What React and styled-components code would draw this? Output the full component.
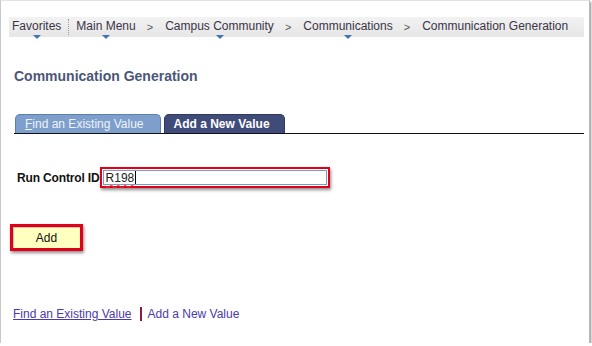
import React from "react";
import styled, { createGlobalStyle } from "styled-components";

const GlobalStyle = createGlobalStyle`
  html, body {
    margin: 0;
    padding: 0;
    background: #ffffff;
  }
  body {
    font-family: "Liberation Sans", Arial, sans-serif;
    font-size: 12px;
  }
`;

const Frame = styled.div`
  box-sizing: border-box;
  width: 590px;
  height: 343px;
  border-top: 1px solid #e4e4e4;
  border-left: 1px solid #c8c8c8;
  border-right: 1px solid #b8b8b8;
  box-shadow: 1px 2px 2px rgba(0, 0, 0, 0.45);
  background: #fff;
  display: flex;
  flex-direction: column;
`;

const Breadcrumbs = styled.nav`
  margin: 16px 5px 0 8px;
  height: 20px;
  display: flex;
  align-items: center;
  background: linear-gradient(#f2f2f2, #e6e6e6);
  padding-left: 3px;
  color: #3a3448;
  font-size: 12px;
`;

const Crumb = styled.span`
  position: relative;
  white-space: nowrap;
  padding-bottom: 2px;
`;

const Caret = styled.span`
  position: absolute;
  left: 50%;
  bottom: -4px;
  margin-left: -4px;
  width: 0;
  height: 0;
  border-left: 4px solid transparent;
  border-right: 4px solid transparent;
  border-top: 4px solid #3f74b8;
`;

const DotSep = styled.span`
  width: 0;
  height: 16px;
  border-left: 1px dotted #9a9a9a;
  margin: 0 7px 0 7px;
`;

const Arrow = styled.span`
  color: #555;
  margin: 0 12px 0 11px;
  font-size: 11px;
`;

const Title = styled.h1`
  margin: 31px 0 0 13px;
  font-size: 14px;
  font-weight: bold;
  color: #4b5776;
`;

const TabRow = styled.div`
  margin: 30px 5px 0 13px;
  display: flex;
  align-items: flex-end;
  gap: 3px;
  padding-left: 1px;
  border-bottom: 1px solid #111;
`;

const Tab = styled.div`
  height: 18px;
  padding: 0 ${(p) => (p.$active ? "14px" : "16px")} 0 9px;
  display: flex;
  align-items: center;
  border: 1px solid ${(p) => (p.$active ? "#2f3a5c" : "#5c7fae")};
  border-bottom: none;
  border-radius: 5px 5px 0 0;
  background: ${(p) => (p.$active ? "#3f4c7a" : "#7e9fcc")};
  color: ${(p) => (p.$active ? "#ffffff" : "#eef3fa")};
  font-weight: ${(p) => (p.$active ? "bold" : "normal")};
  font-size: 12px;
`;

const FieldRow = styled.div`
  margin: 33px 0 0 16px;
  display: flex;
  align-items: center;
`;

const Label = styled.label`
  font-weight: bold;
  font-size: 12px;
  color: #111;
  margin-right: 0;
  letter-spacing: -0.15px;
`;

const InputBox = styled.div`
  box-sizing: border-box;
  width: 230px;
  height: 21px;
  border: 2px solid #e0001a;
  box-shadow: 1px 2px 3px rgba(0, 0, 0, 0.45);
  display: flex;
  align-items: center;
  padding: 1px;
`;

const InputInner = styled.div`
  box-sizing: border-box;
  flex: 1;
  height: 100%;
  border: 1px solid #7f9db9;
  display: flex;
  align-items: center;
  padding-left: 2px;
  font-size: 12px;
  color: #222;
`;

const Typed = styled.span`
  text-decoration: underline wavy #e33;
  text-underline-offset: 2px;
  text-decoration-thickness: 1px;
`;

const Cursor = styled.span`
  display: inline-block;
  width: 1px;
  height: 13px;
  background: #000;
  margin-left: 1px;
`;

const AddButton = styled.button`
  box-sizing: border-box;
  margin: 36px 0 0 9px;
  width: 73px;
  height: 27px;
  border: 3px solid #e0001a;
  background: #ffffc0;
  box-shadow: inset 1px 1px 0 #c8c8a8, 1px 2px 3px rgba(0, 0, 0, 0.45);
  font-family: "Liberation Sans", Arial, sans-serif;
  font-size: 12px;
  color: #111;
  padding: 0;
`;

const Links = styled.div`
  margin: 56px 0 0 12px;
  display: flex;
  align-items: center;
  font-size: 12px;
`;

const Link = styled.a`
  color: #4b3aa8;
  text-decoration: ${(p) => (p.$underline ? "underline" : "none")};
`;

const Bar = styled.span`
  width: 2px;
  height: 14px;
  background: #8a1c3c;
  margin: 0 6px 0 8px;
`;

const crumbs = [
  { text: "Main Menu", caret: true },
  { text: "Campus Community", caret: true },
  { text: "Communications", caret: true },
  { text: "Communication Generation", caret: false },
];

export default function App() {
  return (
    <>
      <GlobalStyle />
      <Frame>
        <Breadcrumbs>
          <Crumb>
            Favorites
            <Caret />
          </Crumb>
          <DotSep />
          {crumbs.map((c, i) => (
            <React.Fragment key={c.text}>
              {i > 0 && <Arrow>&gt;</Arrow>}
              <Crumb>
                {c.text}
                {c.caret && <Caret />}
              </Crumb>
            </React.Fragment>
          ))}
        </Breadcrumbs>
        <Title>Communication Generation</Title>
        <TabRow>
          <Tab>
            <span>
              <u>F</u>ind an Existing Value
            </span>
          </Tab>
          <Tab $active>Add a New Value</Tab>
        </TabRow>
        <FieldRow>
          <Label>Run Control ID</Label>
          <InputBox>
            <InputInner>
              <Typed>R198</Typed>
              <Cursor />
            </InputInner>
          </InputBox>
        </FieldRow>
        <div>
          <AddButton>Add</AddButton>
        </div>
        <Links>
          <Link href="#" $underline>
            Find an Existing Value
          </Link>
          <Bar />
          <Link href="#">Add a New Value</Link>
        </Links>
      </Frame>
    </>
  );
}
